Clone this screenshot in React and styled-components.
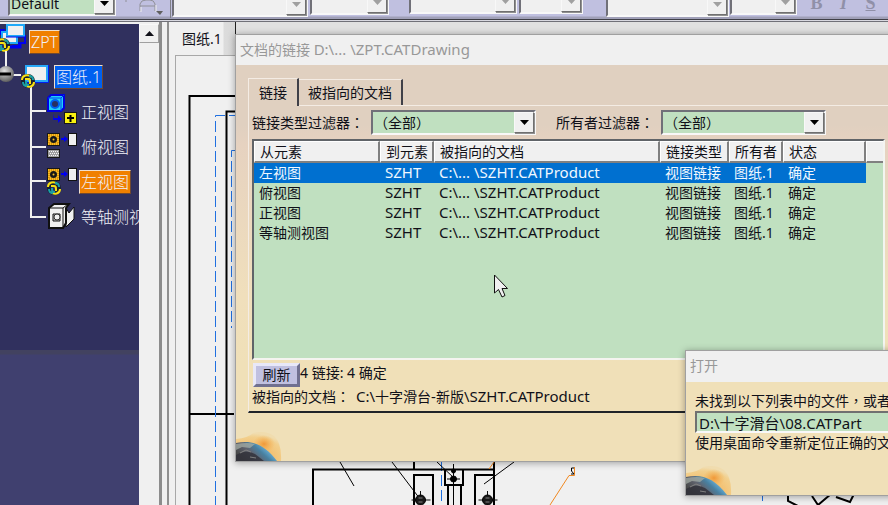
import { useState } from "react";
import styled, { createGlobalStyle } from "styled-components";

const GlobalStyle = createGlobalStyle`
  * {
    box-sizing: border-box;
  }

  body {
    margin: 0;
    overflow: hidden;
    background: #f0f0f0;
    color: #101018;
    font: 14px/20px "Noto Sans", "Noto Sans CJK SC", sans-serif;
  }

  button,
  select,
  input {
    font: inherit;
    color: inherit;
    margin: 0;
    border-radius: 0;
  }
`;

const Screen = styled.div`
  position: relative;
  display: flex;
  flex-direction: column;
  height: 100vh;
  overflow: hidden;
`;

/* ---------- text ---------- */

const Latin = styled.span`
  font-size: 15px;
  line-height: 1;
`;

/* full-width punctuation centred in its cell */
const Mark = styled.span`
  font-family: "Noto Sans CJK TC", sans-serif;
  line-height: 1;
`;

/* ---------- toolbar ---------- */

const Toolbar = styled.div`
  display: flex;
  flex: none;
  align-items: flex-end;
  height: 22px;
  padding: 0 0 4px 8px;
  overflow: hidden;
  background: linear-gradient(#c0c0e0 16px, #a0a0b8 17px, #a0a0b8 19px, #404048 19px, #404048 20px, #d8d8e0 20px, #d8d8e0 21px, #707078 21px);
`;

const Combo = styled.div`
  display: grid;
  grid-template-columns: 1fr 20px;
  flex: none;
  width: ${({ $width }) => $width}px;
  height: 25px;
  margin-bottom: ${({ $lift }) => $lift || 0}px;
  border: 2px solid;
  border-color: #707078 #f8f8f8 #f8f8f8 #707078;
  background: ${({ $disabled }) => ($disabled ? "#f0f0f0" : "#c0e0c0")};

  select {
    grid-area: 1 / 1 / 2 / 3;
    width: 100%;
    height: 21px;
    padding: 0 0 0 1px;
    border: 0;
    outline: 0;
    appearance: none;
    background: transparent;
  }

  span {
    grid-area: 1 / 2;
    z-index: 1;
    display: flex;
    align-items: center;
    justify-content: center;
    border: 1px solid;
    border-color: #f8f8f8 #707070 #707070 #f8f8f8;
    box-shadow: 1px 1px 0 #909090;
    background: #f0f0f0;
    color: ${({ $disabled }) => ($disabled ? "#a0a0a0" : "#000")};
    pointer-events: none;
  }
`;

const Gap = styled.div`
  flex: none;
  width: ${({ $width }) => $width}px;
`;

const ToolIcon = styled.svg`
  flex: none;
  width: 56px;
  height: 18px;
`;

const FormatButton = styled.button`
  flex: none;
  width: 27px;
  height: 24px;
  margin-bottom: 3px;
  padding: 0;
  border: 0;
  background: transparent;
  color: #9090a8;
  font: bold 18px/24px "Liberation Serif", serif;
  font-style: ${({ $italic }) => ($italic ? "italic" : "normal")};
  text-decoration: ${({ $underline }) => ($underline ? "underline" : "none")};
`;

/* ---------- specification tree ---------- */

const Workspace = styled.div`
  display: flex;
  flex: 1;
  min-height: 0;
`;

const Tree = styled.ul`
  flex: none;
  width: 139px;
  margin: 2px 0 0;
  padding: 0;
  overflow: hidden;
  list-style: none;
  background: linear-gradient(#30305e 326px, #424260 326px, #424260 330px, #40406f 331px);
`;

const TreeRow = styled.li`
  display: flex;
  align-items: center;
  height: 35px;
  color: #f0f0f8;
  font-size: 16px;
  font-weight: 300;
  white-space: nowrap;

  svg {
    flex: none;
    height: 35px;
  }
`;

const TreeLabel = styled.span`
  height: 24px;
  line-height: 22px;
  padding: 0 1px;
  border: 1px solid;
  border-color: ${({ $fill }) => ($fill ? "#f0e0d0 #704830 #704830 #f0e0d0" : "transparent")};
  background: ${({ $fill }) => $fill || "transparent"};
`;

const ScrollTrack = styled.div`
  flex: none;
  width: 20px;
  margin-top: 2px;
  background: #f0f0f0;
`;

const ScrollButton = styled.button`
  display: flex;
  align-items: center;
  justify-content: center;
  width: 20px;
  height: 19px;
  padding: 0;
  border: 1px solid;
  border-color: #f8f8f8 #a0a0a0 #a0a0a0 #f8f8f8;
  background: #f0f0f0;
`;

const Splitter = styled.div`
  flex: none;
  width: 10px;
  border-left: 3px solid #8c8c8c;
  border-right: 2px solid #909090;
`;

/* ---------- drawing sheet ---------- */

const SheetPane = styled.div`
  display: flex;
  flex: 1;
  flex-direction: column;
  min-width: 0;
`;

const SheetTabs = styled.div`
  display: flex;
  flex: none;
  height: 33px;
  background: #e0e0e0;
`;

const SheetTab = styled.button`
  width: 67px;
  padding: 0 0 0 13px;
  border: 0;
  border-right: 1px solid #202020;
  background: linear-gradient(90deg, #f0f0f0 54px, #dcdcdc 55px, #d8d8d8);
  text-align: left;
  white-space: nowrap;
`;

const Sheet = styled.div`
  flex: 1;
  min-height: 0;
  margin-left: 6px;
  border: solid #a8a8a8;
  border-width: 1px 0 0 1px;
  overflow: hidden;

  svg {
    display: block;
    width: 100%;
    height: 100%;
  }
`;

/* ---------- dialogs ---------- */

const Dialog = styled.section`
  position: absolute;
  top: ${({ $top }) => $top}px;
  left: ${({ $left }) => $left}px;
  right: -16px;
  border: 1px solid #a0a0a0;
  background: ${({ $warm }) =>
    $warm ? "#f0e0b8" : "linear-gradient(#e0d0c0 90px, #e6d2c0 110px, #f0dfbc 260px, #f0e0b8 330px)"};
  box-shadow: 0 1px 7px rgba(0, 0, 0, 0.35);
  white-space: nowrap;
`;

const Title = styled.h2`
  height: ${({ $height }) => $height}px;
  margin: 0;
  padding-left: 4px;
  background: #f0f0f0;
  color: #989898;
  font-size: 14px;
  font-weight: 400;
  line-height: 30px;
`;

const DialogBody = styled.div`
  padding: 13px 14px 0 12px;
`;

const TabList = styled.div`
  display: flex;
  align-items: flex-end;
  height: 27px;
`;

const Tab = styled.button`
  height: ${({ $active }) => ($active ? 28 : 26)}px;
  margin-bottom: ${({ $active }) => ($active ? -1 : 0)}px;
  padding: 0 ${({ $active }) => ($active ? 10 : 9)}px;
  border: solid;
  border-width: 1px 2px 0 ${({ $active }) => ($active ? 1 : 0)}px;
  border-color: #f4ece4 #404048 transparent #f4ece4;
  background: #e0d0c0;
  z-index: 1;
`;

const TabPanel = styled.div`
  padding: 4px 3px;
  border: solid #f4ece4;
  border-width: 1px 1px 2px;
  border-bottom-color: #202428;
`;

const Filters = styled.div`
  display: flex;
  align-items: center;
  margin-bottom: 4px;

  label {
    width: 119px;
  }

  label + div + label {
    width: 105px;
    margin-left: 20px;
  }
`;

const ListBox = styled.div`
  min-height: 221px;
  border: 2px solid;
  border-color: #606468 #f4f4f0 #f4f4f0 #606468;
  background: #c0e0c0;
`;

const LinkTable = styled.table`
  width: 100%;
  table-layout: fixed;
  border-collapse: separate;
  border-spacing: 0;

  th {
    height: 22px;
    padding: 0 0 0 5px;
    border: solid;
    border-width: 1px 2px 2px 1px;
    border-color: #fff #808080 #808080 #fff;
    background: #f0f0f0;
    font-weight: 400;
    line-height: 18px;
    text-align: left;
  }

  th:last-child {
    border-right: 0;
  }

  td {
    height: 20px;
    padding: 0 0 0 5px;
    line-height: 18px;
  }
`;

const LinkRow = styled.tr`
  color: ${({ $selected }) => ($selected ? "#f0f8ff" : "#101018")};

  td:not(:last-child) {
    background: ${({ $selected }) => ($selected ? "#0070d0" : "transparent")};
  }
`;

const Status = styled.div`
  display: flex;
  align-items: flex-start;
  margin-top: 3px;
`;

const RefreshButton = styled.button`
  width: 47px;
  height: 24px;
  margin-left: 1px;
  padding: 0;
  border: 3px solid;
  border-color: #e8e8f8 #707090 #707090 #e8e8f8;
  background: #c0c0e0;
  line-height: 18px;
`;

const PathLine = styled.div`
  display: flex;
  gap: 6px;
  height: 20px;
`;

const Footer = styled.div`
  display: flex;
  align-items: flex-end;
  height: ${({ $height }) => $height}px;

  svg {
    display: block;
  }
`;

const MessageBody = styled.div`
  padding: 9px 0 0 9px;

  p {
    height: 20px;
    margin: 0;
  }
`;

const PathInput = styled.input`
  display: block;
  width: 100%;
  height: 22px;
  padding: 0 2px;
  border: 2px solid;
  border-color: #707070 #f8f8f8 #f8f8f8 #707070;
  outline: 0;
  background: #c0e0c0;
  font-size: 15px;
  line-height: 18px;
`;

const Pointer = styled.svg`
  position: absolute;
  left: 494px;
  top: 274px;
`;

/* ---------- small drawings ---------- */

function Arrow({ up }) {
  return (
    <svg width="9" height="5" viewBox="0 0 9 5" fill="currentColor">
      <path d={up ? "M0 5h9L4.500 0z" : "M0 0h9L4.500 5z"} />
    </svg>
  );
}

/* two interlocked links, one yellow and one teal */
function Rings({ x, y }) {
  return (
    <g transform={`translate(${x} ${y})`} fill="none" strokeWidth="2">
      <circle r="5" stroke="#182030" strokeWidth="4" />
      <path d="M-6-1C-6-6 0-7 3-4M6 1C6 6 0 7-3 4" stroke="#f8e010" />
      <path d="M-5 1c0 3 2 4 4 4M5-1c0-3-2-4-4-4" stroke="#18a0a8" />
      <path d="M-3-2h3q2 0 2 3v2" stroke="#f8e010" />
      <path d="M-2 0v2q0 2 3 2" stroke="#18a0a8" />
    </g>
  );
}

function ProjectedView() {
  return (
    <g>
      <rect x="47.500" y="4.500" width="12" height="12" fill="#f8c020" stroke="#181818" />
      <path d="M49 6h9v9h-9z" fill="none" stroke="#c06000" strokeDasharray="1 1" />
      <circle cx="53.500" cy="10.500" r="3.500" fill="#181818" />
      <circle cx="53.500" cy="10.500" r="1" fill="#f8c020" />
      <path d="M61 9h3V7l4 3-4 3v-2h-3z" fill="#0000f0" />
      <rect x="68.500" y="4.500" width="8" height="12" fill="#f0f0f0" stroke="#101010" />
    </g>
  );
}

const branch = "M31 0V35M31 17H46";

const icons = {
  root: (
    <svg width="29">
      <path d="M1 11V6h4M12 22h7v-3h6v-8" fill="none" stroke="#0000f0" strokeWidth="2" />
      <path d="M2 8h15v11H2z" fill="#f0f0f0" stroke="#20a8f8" strokeWidth="2" />
      <path d="M10 23h10v-3" fill="none" stroke="#0000f0" strokeWidth="3" />
      <rect x="7" y="1" width="17" height="11" fill="#f0f0f0" stroke="#20a8f8" strokeWidth="2" />
      <path d="M6 13h19" stroke="#0000f0" />
      <Rings x={3} y={21} />
      <path d="M6 27V35" stroke="#f0f0f0" strokeWidth="2" />
    </svg>
  ),
  sheet: (
    <svg width="54">
      <defs>
        <radialGradient id="knob" cx="0.400" cy="0.300" r="0.700">
          <stop offset="0" stopColor="#e0e0e0" />
          <stop offset="1" stopColor="#606060" />
        </radialGradient>
      </defs>
      <path d="M6 0V8M13 16H21M31 26V35" stroke="#f0f0f0" strokeWidth="2" />
      <circle cx="6" cy="15" r="8" fill="url(#knob)" />
      <path d="M0 15H11" stroke="#000" strokeWidth="3" />
      <path d="M26 7h21v15H26z" fill="#f0f0f0" stroke="#28a8f8" strokeWidth="2" />
      <path d="M25 23.500h23.500V6" fill="none" stroke="#0020f0" />
      <Rings x={28} y={22} />
    </svg>
  ),
  front: (
    <svg width="79">
      <path d={branch} stroke="#f0f0f0" strokeWidth="2" />
      <path d="M48 4l3-3h13v13l-3 3H48z" fill="#20d0f8" stroke="#0000e0" strokeWidth="2" />
      <path d="M48 4h13v13M61 4l3-3" fill="none" stroke="#0040f0" />
      <circle cx="55" cy="10" r="4" fill="#283060" stroke="#0060f0" strokeWidth="2" />
      <path d="M54 19v5h4v-3l4 4-4 4v-3h-5" fill="#0000f0" />
      <rect x="64.500" y="18.500" width="12" height="11" fill="#f8f010" stroke="#181818" />
      <path d="M67 24h7M70.500 21v7" stroke="#000" strokeWidth="2" />
    </svg>
  ),
  top: (
    <svg width="79">
      <path d="M31 0V35M31 18H46" stroke="#f0f0f0" strokeWidth="2" />
      <ProjectedView />
      <rect x="47.500" y="20.500" width="12" height="8" fill="#a0a0a0" stroke="#181818" />
      <path d="M49 22.500h10M50 24.500h9M49 26.500h10" stroke="#f8f8f8" strokeDasharray="1 1" />
    </svg>
  ),
  left: (
    <svg width="79">
      <path d={branch} stroke="#f0f0f0" strokeWidth="2" />
      <ProjectedView />
      <Rings x={54} y={24} />
    </svg>
  ),
  iso: (
    <svg width="79">
      <path d="M31 0V18H46" fill="none" stroke="#f0f0f0" strokeWidth="2" />
      <path d="M66 9l3 5 5-6v12l-8 8z" fill="#f0f0f0" stroke="#101010" />
      <path d="M49 9l5-4h15l-3 4v15l-3 5H49z" fill="#f0f0f0" stroke="#101010" strokeWidth="2" />
      <path d="M49 9h14v20M63 9l5-4" fill="none" stroke="#101010" />
      <path d="M53 15h7v7h-7z" fill="#c8c8c8" stroke="#101010" />
      <circle cx="57" cy="18" r="3" fill="#f0f0f0" stroke="#303030" />
    </svg>
  ),
};

function Globe() {
  return (
    <svg width="46" height="30" viewBox="0 0 46 30">
      <defs>
        <radialGradient id="halo" cx="0.350" cy="0.900" r="0.850">
          <stop offset="0.500" stopColor="#f4c070" />
          <stop offset="0.850" stopColor="#f2cf8c" />
          <stop offset="1" stopColor="#f0dcae" />
        </radialGradient>
        <radialGradient id="glow">
          <stop offset="0" stopColor="#f09838" />
          <stop offset="1" stopColor="#f4b050" stopOpacity="0" />
        </radialGradient>
        <linearGradient id="earth" x1="0" y1="0.800" x2="1" y2="0.300">
          <stop offset="0.100" stopColor="#484848" />
          <stop offset="0.400" stopColor="#606470" />
          <stop offset="0.600" stopColor="#4880a0" />
          <stop offset="0.800" stopColor="#68b0d8" />
          <stop offset="1" stopColor="#305888" />
        </linearGradient>
      </defs>
      <path d="M0 8Q12 7 17 2Q30-1 38 5Q46 12 45 30H0z" fill="url(#halo)" />
      <ellipse cx="28" cy="13" rx="11" ry="9" fill="url(#glow)" />
      <path d="M0 12C16 9 28 13 41 30H0z" fill="url(#earth)" />
      <path d="M0 13Q12 11 19 13L14 17 6 16 0 19z" fill="#a8b0a8" opacity="0.700" />
      <path d="M0 24Q9 18 19 23L28 30H0z" fill="#303038" opacity="0.800" />
      <path d="M4 22l6-3 5 2M14 26l6 1" fill="none" stroke="#808080" />
    </svg>
  );
}

function Bolt({ x, y }) {
  return (
    <g transform={`translate(${x} ${y})`}>
      <path d="M-9 0H10M0-9V9" stroke="#101010" />
      <circle r="5" fill="#181818" stroke="#000" />
      <path d="M-2-2h4M-2 2h4" stroke="#808080" />
    </g>
  );
}

function SheetDrawing() {
  return (
    <svg>
      <g transform="translate(-176 -56)" fill="none" stroke="#000">
        <path d="M600 96H189.500V600M600 111.500H226.500V600M189 414H234" strokeWidth="2" />
        <g stroke="#2070e0" strokeDasharray="11 4">
          <path d="M600 115.500H215.500V600" />
          <path d="M236 150.500H231.500V328" />
          <path d="M441.500 460V505M762.500 490V505" />
        </g>
        <path d="M313 505V469.500H494M414 460V469M494 460V505" strokeWidth="2" />
        <path d="M414 505V475H433V505M475 505V475H494" strokeWidth="2" />
        <path d="M445 470V485H463V470M448 485V505M461 485V505" strokeWidth="2" />
        <path d="M453.500 464V505M447 479H460M340 462L354 486M392 462L420 499M437 462L454 478M514 462L484 484" />
        <circle cx="453.500" cy="479" r="3" fill="#000" />
        <circle cx="453.500" cy="471" r="2" fill="#000" />
        <Bolt x={420.5} y={500} />
        <Bolt x={487.5} y={500} />
        <path d="M494 462L489 469M550 505L569 475.500H574.500V467" stroke="#f08820" />
        <path d="M574 468H571.500V471L574 474H571" />
        <path d="M788 490V501L800 507M812 496L818 505L831 494M836 497L850 502L854 494" strokeWidth="2" />
      </g>
    </svg>
  );
}

/* ---------- data ---------- */

const tree = [
  { icon: "root", label: "ZPT", fill: "#f08000" },
  { icon: "sheet", label: "图纸.1", fill: "#0060f0" },
  { icon: "front", label: "正视图" },
  { icon: "top", label: "俯视图" },
  { icon: "left", label: "左视图", fill: "#f08000" },
  { icon: "iso", label: "等轴测视图" },
];

const columns = [
  { title: "从元素", width: 126 },
  { title: "到元素", width: 54 },
  { title: "被指向的文档", width: 226 },
  { title: "链接类型", width: 69 },
  { title: "所有者", width: 54 },
  { title: "状态", width: 83 },
  { title: "" },
];

const views = ["左视图", "俯视图", "正视图", "等轴测视图"];

function ComboBox({ id, width, lift, disabled, label, value = "" }) {
  return (
    <Combo $width={width} $lift={lift} $disabled={disabled}>
      <select id={id} aria-label={label} disabled={disabled}>
        <option>{value}</option>
      </select>
      <span>
        <Arrow />
      </span>
    </Combo>
  );
}

export default function App() {
  const [selected, setSelected] = useState(0);
  const [path, setPath] = useState("D:\\十字滑台\\08.CATPart");

  return (
    <Screen>
      <GlobalStyle />
      <Toolbar>
        <ComboBox width={108} lift={2} label="样式" value="Default" />
        <ToolIcon>
          <path d="M10 0V2M24 11V4q1-4 6-4h4q4 0 5 4v7M24 6h15" fill="none" stroke="#909098" />
          <path d="M25 12V7M40 12V5" stroke="#f0f0f0" />
          <path d="M40 11h7l-3 4z" fill="#606060" />
          <path d="M54.500 0V18" stroke="#808088" />
        </ToolIcon>
        <ComboBox width={136} lift={1} disabled label="字体" />
        <Gap $width={2} />
        <ComboBox width={79} lift={3} disabled label="字号" />
        <Gap $width={20} />
        <ComboBox width={108} lift={4} disabled label="线宽" />
        <Gap $width={2} />
        <ComboBox width={64} lift={4} disabled label="线型" />
        <Gap $width={23} />
        <ComboBox width={123} lift={1} disabled label="图层" />
        <Gap $width={1} />
        <ComboBox width={67} lift={3} disabled label="过滤" />
        <Gap $width={6} />
        <FormatButton>B</FormatButton>
        <FormatButton $italic>I</FormatButton>
        <FormatButton $underline>S</FormatButton>
      </Toolbar>

      <Workspace>
        <Tree>
          {tree.map(({ icon, label, fill }) => (
            <TreeRow key={label}>
              {icons[icon]}
              <TreeLabel $fill={fill}>{label}</TreeLabel>
            </TreeRow>
          ))}
        </Tree>
        <ScrollTrack>
          <ScrollButton aria-label="向上滚动">
            <Arrow up />
          </ScrollButton>
        </ScrollTrack>
        <Splitter />
        <SheetPane>
          <SheetTabs>
            <SheetTab>图纸.1</SheetTab>
          </SheetTabs>
          <Sheet>
            <SheetDrawing />
          </Sheet>
        </SheetPane>
      </Workspace>

      <Dialog $top={34} $left={235}>
        <Title $height={30}>
          文档的链接 <Latin>D:\... \ZPT.CATDrawing</Latin>
        </Title>
        <DialogBody>
          <TabList role="tablist">
            <Tab role="tab" aria-selected="true" $active>
              链接
            </Tab>
            <Tab role="tab" aria-selected="false">
              被指向的文档
            </Tab>
          </TabList>
          <TabPanel role="tabpanel">
            <Filters>
              <label htmlFor="type-filter">
                链接类型过滤器<Mark>：</Mark>
              </label>
              <ComboBox id="type-filter" width={165} value="（全部）" />
              <label htmlFor="owner-filter">
                所有者过滤器<Mark>：</Mark>
              </label>
              <ComboBox id="owner-filter" width={165} value="（全部）" />
            </Filters>
            <ListBox>
              <LinkTable>
                <colgroup>
                  {columns.map(({ title, width }) => (
                    <col key={title} width={width} />
                  ))}
                </colgroup>
                <thead>
                  <tr>
                    {columns.map(({ title }) => (
                      <th key={title}>{title}</th>
                    ))}
                  </tr>
                </thead>
                <tbody>
                  {views.map((view, i) => (
                    <LinkRow key={view} $selected={i === selected} onClick={() => setSelected(i)}>
                      <td>{view}</td>
                      <td>
                        <Latin>SZHT</Latin>
                      </td>
                      <td>
                        <Latin>C:\... \SZHT.CATProduct</Latin>
                      </td>
                      <td>视图链接</td>
                      <td>图纸.1</td>
                      <td>确定</td>
                      <td />
                    </LinkRow>
                  ))}
                </tbody>
              </LinkTable>
            </ListBox>
            <Status>
              <RefreshButton>刷新</RefreshButton>
              <span>4 链接: 4 确定</span>
            </Status>
            <PathLine>
              <span>
                被指向的文档<Mark>：</Mark>
              </span>
              <span>
                <Latin>C:\</Latin>十字滑台<Latin>-</Latin>新版<Latin>\SZHT.CATProduct</Latin>
              </span>
            </PathLine>
          </TabPanel>
        </DialogBody>
        <Footer $height={48}>
          <Globe />
        </Footer>
      </Dialog>

      <Dialog $top={350} $left={685} $warm>
        <Title $height={31}>打开</Title>
        <MessageBody>
          <p>
            未找到以下列表中的文件<Mark>，</Mark>或者
          </p>
          <PathInput aria-label="文件" value={path} onChange={(e) => setPath(e.target.value)} />
          <p>使用桌面命令重新定位正确的文件</p>
        </MessageBody>
        <Footer $height={42}>
          <Globe />
        </Footer>
      </Dialog>

      <Pointer width="14" height="24" viewBox="0 0 14 24">
        <path d="M0.500 1V19L4.500 15.500L8 23L11 21.500L8 14.500H13.500Z" fill="#f0f0f0" stroke="#101010" />
      </Pointer>
    </Screen>
  );
}
